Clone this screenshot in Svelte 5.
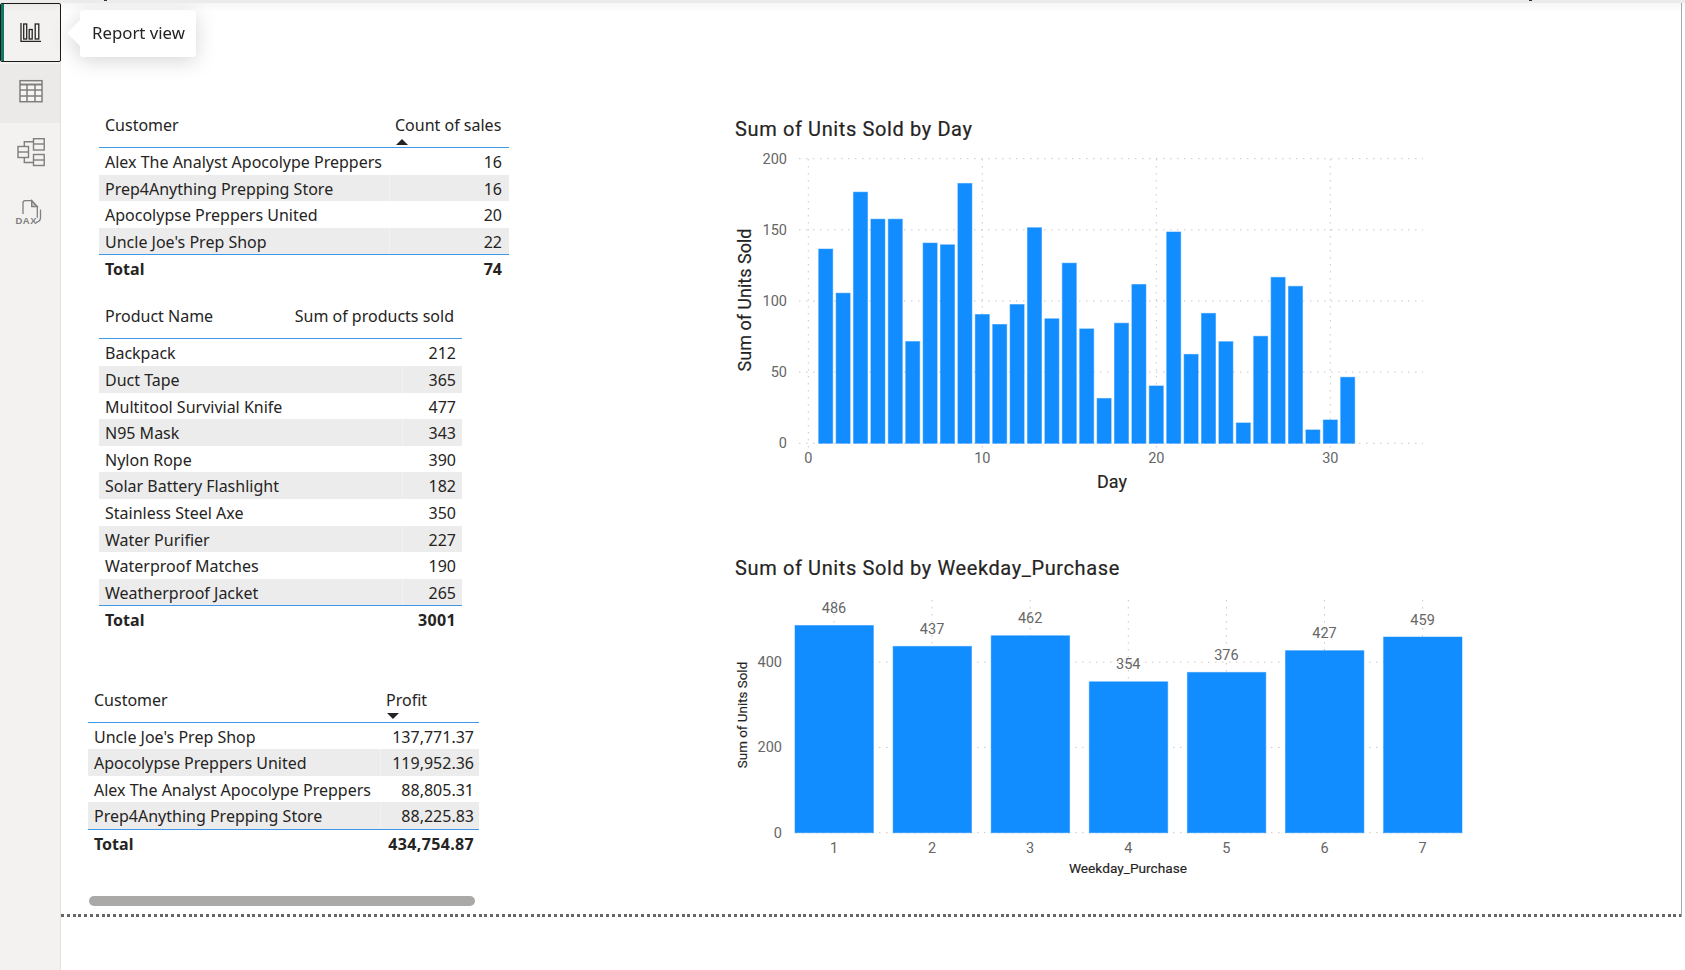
<script>
  const t1 = [["Alex The Analyst Apocolype Preppers","16"],["Prep4Anything Prepping Store","16"],["Apocolypse Preppers United","20"],["Uncle Joe's Prep Shop","22"]];
  const t2 = [["Backpack","212"],["Duct Tape","365"],["Multitool Survivial Knife","477"],["N95 Mask","343"],["Nylon Rope","390"],["Solar Battery Flashlight","182"],["Stainless Steel Axe","350"],["Water Purifier","227"],["Waterproof Matches","190"],["Weatherproof Jacket","265"]];
  const t3 = [["Uncle Joe's Prep Shop","137,771.37"],["Apocolypse Preppers United","119,952.36"],["Alex The Analyst Apocolype Preppers","88,805.31"],["Prep4Anything Prepping Store","88,225.83"]];
  const days = [136.5,105.5,176.5,157.5,157.5,71.5,140.7,139.5,182.6,90.5,83.5,97.5,151.5,87.5,126.6,80.4,31.5,84.4,111.6,40.3,148.5,62.5,91.3,71.4,14.3,75.2,116.6,110.3,9.4,16.4,46.4];
  const weekdays = [486,437,462,354,376,427,459];
  const y1 = (v) => 443.3 - v * 1.423;
  const x1 = (d) => 808.3 + d * 17.4;
  const y2 = (v) => 832.7 - v * 0.4263;
  const x2 = (i) => 834 + i * 98.1;
</script>

<div class="page">
  <div class="topbar">
    <span class="crumb c1"></span>
    <span class="crumb c2"></span>
  </div>
  <div class="body">
    <nav class="sidebar">
      <div class="tab active">
        <svg width="60" height="59" viewBox="0 3 60 59" fill="none" stroke="#252423" stroke-width="1.3">
          <path d="M21 23v18.3h20" />
          <rect x="23.7" y="24" width="3" height="15" />
          <rect x="29.2" y="29.5" width="3" height="9.5" />
          <rect x="35.2" y="24" width="3.6" height="15" />
        </svg>
      </div>
      <div class="tab hover">
        <svg width="60" height="59" viewBox="0 64 60 59" fill="none" stroke="#7f7f7f" stroke-width="1.5">
          <rect x="20" y="80.7" width="22" height="21" fill="#f6f5f4" />
          <path d="M20 84.5h22" stroke-width="2" />
          <path d="M20 90h22M20 96h22M27 84.5v17.2M35 84.5v17.2" />
        </svg>
      </div>
      <div class="tab">
        <svg width="60" height="59" viewBox="0 123 60 59" fill="none" stroke="#7f7f7f" stroke-width="1.4">
          <rect x="18" y="146.5" width="10.5" height="11" />
          <path d="M18 152h10.5" />
          <rect x="33.5" y="138.7" width="10.7" height="11.3" />
          <path d="M33.5 144h10.7" />
          <rect x="33.5" y="154.5" width="10.7" height="11" />
          <path d="M33.5 160h10.7" />
          <path d="M24.3 146.5v-4.8h9.2M24.3 157.5v5h9.2" />
        </svg>
      </div>
      <div class="tab">
        <svg width="60" height="59" viewBox="0 182 60 59" fill="none" stroke="#7f7f7f" stroke-width="1.3">
          <path d="M23 214v-11q0-2.3 2.3-2.3h6.4l5.6 6v11" />
          <path d="M31.7 200.7v6h5.6z" fill="#c8c6c4" />
          <path d="M40.5 209.5v8q0 4-4.5 5" />
          <text x="15.5" y="223.5" class="dax">DAX</text>
        </svg>
      </div>
    </nav>

    <main class="canvas">
      <div class="report">
        <section class="left">
          <div class="table one">
            <div class="row head">
              <div class="cell">Customer</div>
              <div class="cell sorted">Count of sales<i class="arrow up"></i></div>
            </div>
            {#each t1 as r, i}
              <div class="row" class:alt={i % 2 === 1}><div class="cell">{r[0]}</div><div class="cell num">{r[1]}</div></div>
            {/each}
            <div class="row total"><div class="cell">Total</div><div class="cell num">74</div></div>
          </div>

          <div class="table two">
            <div class="row head">
              <div class="cell">Product Name</div>
              <div class="cell sumhead">Sum of products sold</div>
            </div>
            {#each t2 as r, i}
              <div class="row" class:alt={i % 2 === 1}><div class="cell">{r[0]}</div><div class="cell num">{r[1]}</div></div>
            {/each}
            <div class="row total"><div class="cell">Total</div><div class="cell num">3001</div></div>
          </div>

          <div class="table three">
            <div class="row head">
              <div class="cell">Customer</div>
              <div class="cell sorted">Profit<i class="arrow down"></i></div>
            </div>
            {#each t3 as r, i}
              <div class="row" class:alt={i % 2 === 1}><div class="cell">{r[0]}</div><div class="cell num">{r[1]}</div></div>
            {/each}
            <div class="row total"><div class="cell">Total</div><div class="cell num">434,754.87</div></div>
          </div>

          <div class="scrollbar"></div>
        </section>

        <section class="right">
          <figure class="chart first">
            <h2>Sum of Units Sold by Day</h2>
            <svg width="730" height="352" viewBox="725 143 730 352">
              {#each [0, 50, 100, 150, 200] as v}
                <line class="grid" x1="799" x2="1423" y1={y1(v)} y2={y1(v)} />
                <text class="tick" x="787" y={y1(v) + 5} text-anchor="end">{v}</text>
              {/each}
              {#each [0, 10, 20, 30] as d}
                <line class="grid" x1={x1(d)} x2={x1(d)} y1="159" y2="448" />
                <text class="tick" x={x1(d)} y="463" text-anchor="middle">{d}</text>
              {/each}
              {#each days as v, i}
                <rect class="bar" x={x1(i + 1) - 7} y={y1(v)} width="14" height={v * 1.423} />
              {/each}
              <text class="axis big" transform="translate(751 300) rotate(-90)" text-anchor="middle">Sum of Units Sold</text>
              <text class="axis big" x="1112" y="488" text-anchor="middle">Day</text>
            </svg>
          </figure>

          <figure class="chart second">
            <h2>Sum of Units Sold by Weekday_Purchase</h2>
            <svg width="760" height="298" viewBox="725 582 760 298">
              {#each [0, 200, 400] as v}
                <line class="grid" x1="795" x2="1462" y1={y2(v)} y2={y2(v)} />
                <text class="tick" x="782" y={y2(v) + 5} text-anchor="end">{v}</text>
              {/each}
              {#each weekdays as v, i}
                <line class="grid" x1={x2(i)} x2={x2(i)} y1="600" y2="836" />
              {/each}
              {#each weekdays as v, i}
                <rect class="bar" x={x2(i) - 39} y={y2(v)} width="78.4" height={v * 0.4263} />
                <text class="tick" x={x2(i)} y={y2(v) - 12.5} text-anchor="middle">{v}</text>
                <text class="tick" x={x2(i)} y="853" text-anchor="middle">{i + 1}</text>
              {/each}
              <text class="axis small rot" transform="translate(747 715) rotate(-90)" text-anchor="middle">Sum of Units Sold</text>
              <text class="axis small" x="1128" y="873" text-anchor="middle">Weekday_Purchase</text>
            </svg>
          </figure>
        </section>
      </div>
      <div class="dots"></div>
    </main>
  </div>

  <div class="tooltip">Report view</div>
</div>

<style>
  :global(body) { margin: 0; background: #fff; }
  .page {
    position: relative;
    width: 1685px;
    height: 970px;
    overflow: hidden;
    font-family: "Noto Sans", "Open Sans", sans-serif;
    color: #252423;
    display: flex;
    flex-direction: column;
  }
  .topbar {
    position: relative;
    z-index: 2;
    height: 3px;
    flex: none;
    background: #ebebeb;
    box-shadow: 0 1px 8px rgba(0, 0, 0, 0.12);
  }
  .crumb { position: absolute; top: 0; width: 3px; height: 1px; background: #333; }
  .c1 { left: 104px; }
  .c2 { left: 1529px; }
  .body { flex: 1; display: flex; min-height: 0; }
  .sidebar {
    width: 60px;
    flex: none;
    background: #f3f2f1;
    border-right: 1px solid #e4e2e0;
    display: flex;
    flex-direction: column;
  }
  .tab { height: 59px; flex: none; }
  .tab svg { display: block; }
  .tab.active {
    box-sizing: border-box;
    width: 61px;
    margin-bottom: 2px;
    border: 1.5px solid #1b1a19;
    border-radius: 2px;
    position: relative;
    overflow: hidden;
  }
  .tab.active svg { margin: -1.5px; }
  .tab.active::before {
    content: "";
    position: absolute;
    left: 0;
    top: 0;
    bottom: 0;
    width: 2.5px;
    background: #117865;
  }
  .tab.hover { background: #ebeae9; }
  .dax { font: 700 9.5px "Liberation Sans", sans-serif; fill: #7f7f7f; stroke: none; letter-spacing: 0.5px; }

  .canvas {
    width: 1621px;
    height: 914px;
    flex: none;
    box-sizing: border-box;
    border-right: 1.5px solid #a9a9a9;
    display: flex;
    flex-direction: column;
  }
  .report { display: flex; flex: 1; min-height: 0; }
  .left { width: 664px; flex: none; padding: 112px 0 0 0; box-sizing: border-box; }
  .right { flex: 1; padding-top: 112px; }
  .dots {
    height: 3px;
    flex: none;
    background: repeating-linear-gradient(90deg, #666 0 3px, transparent 3px 5.8px);
  }

  .table { font-size: 16px; }
  .row { display: flex; height: 26.6px; line-height: 26.6px; box-sizing: border-box; }
  .cell { padding: 1px 6px 0; white-space: nowrap; }
  .cell:first-child { flex: 1; min-width: 0; }
  .num { text-align: right; border-left: 1px solid transparent; box-sizing: border-box; }
  .alt { background: #ececec; }
  .alt .num { border-left-color: #f2f2f2; }
  .head { height: 33px; line-height: 21px; border-bottom: 1.5px solid #3f97e8; }
  .head .cell { padding-top: 0; }
  .sorted { position: relative; box-sizing: border-box; }
  .arrow {
    position: absolute;
    left: 7px;
    width: 0;
    height: 0;
    border-left: 6px solid transparent;
    border-right: 6px solid transparent;
  }
  .arrow.up { top: 24px; border-bottom: 6px solid #252423; }
  .arrow.down { top: 23px; border-top: 6px solid #252423; }
  .total { font-weight: 700; border-top: 1.5px solid #3f97e8; }

  .one { margin-left: 38px; width: 410px; }
  .one .cell:nth-child(2) { width: 120px; }
  .one .num { padding-right: 7px; }
  .two { margin-left: 38px; width: 363px; margin-top: 25.5px; }
  .two .cell:nth-child(2) { width: 60px; }
  .two .head .cell:nth-child(2) { width: auto; }
  .two .total .num { letter-spacing: 0.35px; }
  .three { margin-left: 27px; width: 391px; margin-top: 57.5px; }
  .three .cell:nth-child(2) { width: 99px; }
  .three .num { padding-right: 5px; }
  .three .total .num { letter-spacing: 0.35px; }
  .sumhead { padding-right: 8px; }
  .scrollbar {
    margin: 41px 0 0 28px;
    width: 386px;
    height: 10px;
    border-radius: 5px;
    background: #aaa9a7;
  }

  .chart { margin: 0; }
  .chart svg { display: block; }
  .second { margin-top: 59px; }
  h2 {
    margin: 0 0 0 10px;
    height: 28px;
    font: 400 20px/28px Roboto, sans-serif;
    letter-spacing: 0.62px;
    color: #252423;
    -webkit-text-stroke: 0.2px #252423;
  }
  .grid { stroke: #c8c8c8; stroke-width: 1; stroke-dasharray: 1.5 5.5; }
  .bar { fill: #118dff; stroke: #118dff; stroke-opacity: 0.5; stroke-width: 1; }
  .tick { font: 14.5px Roboto, sans-serif; fill: #666666; }
  .axis { font-family: Roboto, sans-serif; fill: #252423; stroke: #252423; stroke-width: 0.15px; }
  .axis.big { font-size: 18px; }
  .axis.small { font-size: 13.7px; }
  .axis.small.rot { font-size: 13.4px; }

  .tooltip {
    position: absolute;
    left: 80px;
    top: 10px;
    width: 116px;
    height: 47px;
    box-sizing: border-box;
    padding-left: 12px;
    line-height: 46px;
    font-size: 16.8px;
    background: #fff;
    border-radius: 3px;
    filter: drop-shadow(0 4px 10px rgba(0, 0, 0, 0.16));
    white-space: nowrap;
  }
  .tooltip::before {
    content: "";
    position: absolute;
    left: -13px;
    top: 10px;
    width: 0;
    height: 0;
    border-top: 13px solid transparent;
    border-bottom: 13px solid transparent;
    border-right: 13px solid #fff;
  }
</style>
